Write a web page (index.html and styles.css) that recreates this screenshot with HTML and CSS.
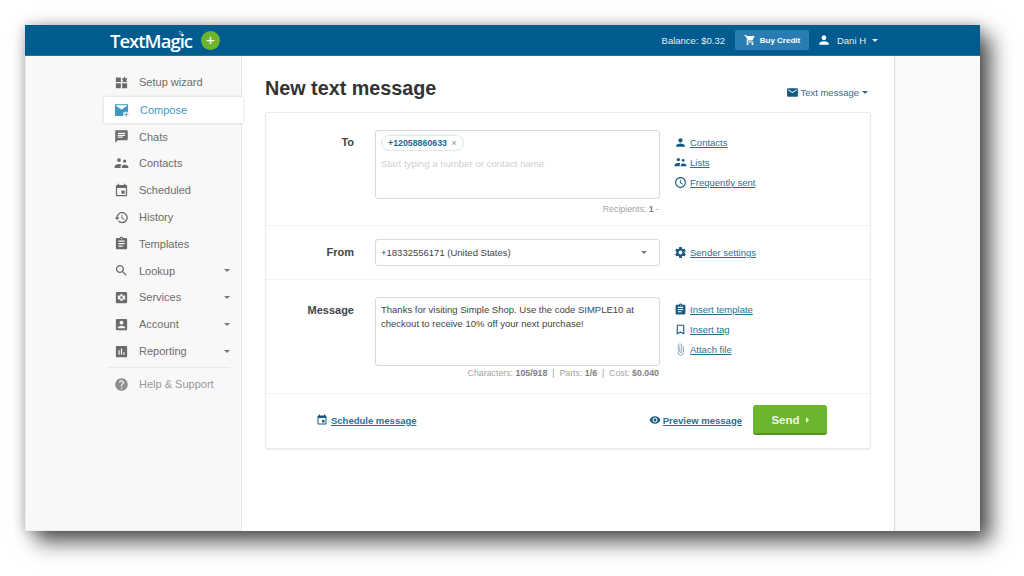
FILE: index.html
```html
<!DOCTYPE html>
<html lang="en">
<head>
    <meta charset="UTF-8">
    <title>New text message - TextMagic</title>
    <link rel="stylesheet" href="styles.css">
</head>
<body>

<svg class="icon-defs" xmlns="http://www.w3.org/2000/svg">
    <symbol id="i-mail" viewBox="0 0 24 24"><path d="M20 4H4c-1.1 0-2 .9-2 2v12c0 1.1.9 2 2 2h16c1.1 0 2-.9 2-2V6c0-1.1-.9-2-2-2zm0 4l-8 5-8-5V6l8 5 8-5v2z"/></symbol>
    <symbol id="i-chat" viewBox="0 0 24 24"><path d="M20 2H4c-1.1 0-2 .9-2 2v18l4-4h14c1.1 0 2-.9 2-2V4c0-1.1-.9-2-2-2zM6 9h12v2H6V9zm8 5H6v-2h8v2zm4-6H6V6h12v2z"/></symbol>
    <symbol id="i-group" viewBox="0 0 24 24"><circle cx="8" cy="6.5" r="3"/><circle cx="17" cy="8" r="2.6"/><path d="M1 19v-2c0-2.6 4-4.2 7-4.2 1.400 0 2.800.3 4 .8-1 .8-1.500 1.900-1.500 3.200V19H1zM12.500 19v-2c0-2 2.700-3 4.500-3s6 1 6 3v2H12.500z"/></symbol>
    <symbol id="i-event" viewBox="0 0 24 24"><path d="M17 12h-5v5h5v-5zM16 1v2H8V1H6v2H5c-1.110 0-1.990.9-1.990 2L3 19c0 1.100.89 2 2 2h14c1.100 0 2-.9 2-2V5c0-1.100-.9-2-2-2h-1V1h-2zm3 18H5V8h14v11z"/></symbol>
    <symbol id="i-history" viewBox="0 0 24 24"><path d="M13 3c-4.970 0-9 4.030-9 9H1l3.890 3.890.07.14L9 12H6c0-3.870 3.130-7 7-7s7 3.130 7 7-3.130 7-7 7c-1.930 0-3.680-.79-4.940-2.060l-1.420 1.420C8.270 19.990 10.510 21 13 21c4.970 0 9-4.030 9-9s-4.030-9-9-9zm-1 5v5l4.280 2.540.72-1.210-3.500-2.080V8H12z"/></symbol>
    <symbol id="i-template" viewBox="0 0 24 24"><path d="M19 3h-4.180C14.400 1.840 13.300 1 12 1c-1.300 0-2.400.84-2.820 2H5c-1.100 0-2 .9-2 2v14c0 1.100.9 2 2 2h14c1.100 0 2-.9 2-2V5c0-1.100-.9-2-2-2zm-7 0c.55 0 1 .45 1 1s-.45 1-1 1-1-.45-1-1 .45-1 1-1zm2 14H7v-2h7v2zm3-4H7v-2h10v2zm0-4H7V7h10v2z"/></symbol>
    <symbol id="i-search" viewBox="0 0 24 24"><path d="M15.500 14h-.79l-.28-.27C15.410 12.590 16 11.110 16 9.500 16 5.910 13.090 3 9.500 3S3 5.910 3 9.500 5.910 16 9.500 16c1.610 0 3.090-.59 4.230-1.570l.27.28v.79l5 4.990L20.490 19l-4.990-5zm-6 0C7.010 14 5 11.990 5 9.500S7.010 5 9.500 5 14 7.010 14 9.500 11.990 14 9.500 14z"/></symbol>
    <symbol id="i-account" viewBox="0 0 24 24"><path d="M3 5v14c0 1.100.89 2 2 2h14c1.100 0 2-.9 2-2V5c0-1.100-.9-2-2-2H5c-1.110 0-2 .9-2 2zm12 4c0 1.660-1.340 3-3 3s-3-1.340-3-3 1.340-3 3-3 3 1.340 3 3zm-9 8c0-2 4-3.100 6-3.100s6 1.100 6 3.100v1H6v-1z"/></symbol>
    <symbol id="i-report" viewBox="0 0 24 24"><path d="M19 3H5c-1.100 0-2 .9-2 2v14c0 1.100.9 2 2 2h14c1.100 0 2-.9 2-2V5c0-1.100-.9-2-2-2zM9 17H7v-7h2v7zm4 0h-2V7h2v10zm4 0h-2v-4h2v4z"/></symbol>
    <symbol id="i-help" viewBox="0 0 24 24"><path d="M12 2C6.480 2 2 6.480 2 12s4.480 10 10 10 10-4.480 10-10S17.520 2 12 2zm1 17h-2v-2h2v2zm2.070-7.750l-.9.92C13.450 12.900 13 13.500 13 15h-2v-.5c0-1.100.45-2.100 1.170-2.830l1.240-1.260c.37-.36.59-.86.59-1.410 0-1.100-.9-2-2-2s-2 .9-2 2H8c0-2.210 1.790-4 4-4s4 1.790 4 4c0 .88-.36 1.680-.93 2.250z"/></symbol>
    <symbol id="i-person" viewBox="0 0 24 24"><path d="M12 12c2.210 0 4-1.790 4-4s-1.790-4-4-4-4 1.790-4 4 1.790 4 4 4zm0 2c-2.670 0-8 1.340-8 4v2h16v-2c0-2.660-5.330-4-8-4z"/></symbol>
    <symbol id="i-cart" viewBox="0 0 24 24"><path d="M7 18c-1.100 0-1.990.9-1.990 2S5.900 22 7 22s2-.9 2-2-.9-2-2-2zM1 2v2h2l3.600 7.590-1.350 2.450c-.16.28-.25.61-.25.96 0 1.100.9 2 2 2h12v-2H7.420c-.14 0-.25-.11-.25-.25l.03-.12.9-1.830h7.450c.75 0 1.410-.41 1.750-1.030l3.580-6.490c.08-.14.12-.31.12-.48 0-.55-.45-1-1-1H5.210l-.94-2H1zm16 16c-1.100 0-1.990.9-1.990 2s.89 2 1.990 2 2-.9 2-2-.9-2-2-2z"/></symbol>
    <symbol id="i-clock" viewBox="0 0 24 24"><path d="M11.990 2C6.470 2 2 6.480 2 12s4.470 10 9.990 10C17.520 22 22 17.520 22 12S17.520 2 11.990 2zM12 20c-4.420 0-8-3.580-8-8s3.580-8 8-8 8 3.580 8 8-3.580 8-8 8zm.5-13H11v6l5.250 3.150.75-1.230-4.500-2.670z"/></symbol>
    <symbol id="i-gear" viewBox="0 0 24 24"><path d="M19.430 12.980c.04-.32.07-.64.07-.98s-.03-.66-.07-.98l2.110-1.650c.19-.15.24-.42.12-.64l-2-3.460c-.12-.22-.39-.3-.61-.22l-2.490 1c-.52-.4-1.080-.73-1.690-.98l-.38-2.650C14.460 2.180 14.250 2 14 2h-4c-.25 0-.46.18-.49.42l-.38 2.650c-.61.25-1.170.59-1.690.98l-2.490-1c-.23-.09-.49 0-.61.22l-2 3.460c-.13.22-.07.49.12.64l2.110 1.650c-.04.32-.07.65-.07.98s.03.66.07.98l-2.110 1.650c-.19.15-.24.42-.12.64l2 3.460c.12.22.39.3.61.22l2.490-1c.52.4 1.080.73 1.690.98l.38 2.650c.03.24.24.42.49.42h4c.25 0 .46-.18.49-.42l.38-2.650c.61-.25 1.170-.59 1.690-.98l2.490 1c.23.09.49 0 .61-.22l2-3.460c.12-.22.07-.49-.12-.64l-2.110-1.650zM12 15.500c-1.930 0-3.500-1.570-3.500-3.500s1.570-3.500 3.500-3.500 3.500 1.570 3.500 3.500-1.570 3.500-3.500 3.500z"/></symbol>
    <symbol id="i-tag" viewBox="0 0 24 24"><path d="M17 3H7c-1.100 0-1.990.9-1.990 2L5 21l7-3 7 3V5c0-1.100-.9-2-2-2zm0 15l-5-2.180L7 18V5h10v13z"/></symbol>
    <symbol id="i-clip" viewBox="0 0 24 24"><path d="M16.500 6v11.500c0 2.210-1.790 4-4 4s-4-1.790-4-4V5c0-1.380 1.120-2.500 2.500-2.500s2.500 1.120 2.500 2.500v10.500c0 .55-.45 1-1 1s-1-.45-1-1V6H10v9.500c0 1.380 1.120 2.500 2.500 2.500s2.500-1.120 2.500-2.500V5c0-2.210-1.790-4-4-4S7 2.790 7 5v12.500c0 3.040 2.460 5.500 5.500 5.500s5.500-2.460 5.500-5.500V6h-1.500z"/></symbol>
    <symbol id="i-eye" viewBox="0 0 24 24"><path d="M12 4.500C7 4.500 2.730 7.610 1 12c1.730 4.390 6 7.500 11 7.500s9.270-3.110 11-7.500c-1.730-4.390-6-7.500-11-7.500zM12 17c-2.760 0-5-2.240-5-5s2.240-5 5-5 5 2.240 5 5-2.240 5-5 5zm0-8c-1.660 0-3 1.340-3 3s1.340 3 3 3 3-1.340 3-3-1.340-3-3-3z"/></symbol>
    <symbol id="i-wizard" viewBox="0 0 24 24"><path d="M3 4h8v7H3zM3 13h8v8H3zM13 13h8v8h-8zM17 2l1.500 3H21v2l-1.500 1.500L21 11h-8l1.500-2.500L13 7V5h2.500z"/></symbol>
    <symbol id="i-services" viewBox="0 0 24 24"><path fill-rule="evenodd" d="M5 3h14a2 2 0 0 1 2 2v14a2 2 0 0 1-2 2H5a2 2 0 0 1-2-2V5a2 2 0 0 1 2-2zm5.500 3.500v2L9 9.200 7 8.500 5.600 11l1.500 1-1.500 1L7 15.500l2-.7 1.500.7v2h3v-2l1.500-.7 2 .7 1.400-2.500-1.500-1 1.500-1L17 8.500l-2 .7-1.500-.7v-2zM12 10a2 2 0 1 1 0 4 2 2 0 0 1 0-4z"/></symbol>
</svg>

<div class="window">
    <header class="topbar">
        <div class="brand">
            <span class="logo">TextMagic
                <svg class="logo-signal" viewBox="0 0 8 8"><path d="M1 4a3 3 0 0 1 3 3M1 1.500a5.500 5.500 0 0 1 5.500 5.500"/></svg>
            </span>
            <span class="add-btn">+</span>
        </div>
        <div class="top-right">
            <span class="balance">Balance: $0.32</span>
            <a class="buy-btn"><svg class="ico-cart"><use href="#i-cart"/></svg>Buy Credit</a>
            <svg class="ico-user"><use href="#i-person"/></svg>
            <span class="user-name">Dani H</span>
            <span class="caret caret-white"></span>
        </div>
    </header>

    <div class="layout">
        <nav class="sidebar">
            <a class="nav-item"><svg class="nav-ico"><use href="#i-wizard"/></svg>Setup wizard</a>
            <a class="nav-item active">
                <svg class="nav-ico" viewBox="0 0 16 16"><path d="M1 2.500h14v8.500h-5v4H1zM2 4l6 4 6-4v-.5H2z" fill-rule="evenodd"/><path class="plus" d="M12.300 10.500h1.400v2H15.700v1.400h-2v2h-1.400v-2h-2v-1.400h2z"/></svg>Compose
            </a>
            <a class="nav-item"><svg class="nav-ico"><use href="#i-chat"/></svg>Chats</a>
            <a class="nav-item"><svg class="nav-ico"><use href="#i-group"/></svg>Contacts</a>
            <a class="nav-item"><svg class="nav-ico"><use href="#i-event"/></svg>Scheduled</a>
            <a class="nav-item"><svg class="nav-ico"><use href="#i-history"/></svg>History</a>
            <a class="nav-item"><svg class="nav-ico"><use href="#i-template"/></svg>Templates</a>
            <a class="nav-item"><svg class="nav-ico"><use href="#i-search"/></svg>Lookup<span class="caret"></span></a>
            <a class="nav-item"><svg class="nav-ico"><use href="#i-services"/></svg>Services<span class="caret"></span></a>
            <a class="nav-item"><svg class="nav-ico"><use href="#i-account"/></svg>Account<span class="caret"></span></a>
            <a class="nav-item"><svg class="nav-ico"><use href="#i-report"/></svg>Reporting<span class="caret"></span></a>
            <div class="nav-divider"></div>
            <a class="nav-item nav-help"><svg class="nav-ico"><use href="#i-help"/></svg>Help &amp; Support</a>
        </nav>

        <main class="content">
            <div class="page-head">
                <h1>New text message</h1>
                <a class="type-switch"><svg class="ico"><use href="#i-mail"/></svg>Text message<span class="caret caret-dark"></span></a>
            </div>

            <div class="card">
                <div class="form-row row-to">
                    <label class="row-label">To</label>
                    <div class="field">
                        <div class="input-box box-tall">
                            <span class="chip">+12058860633 <i>×</i></span>
                            <div class="placeholder">Start typing a number or contact name</div>
                        </div>
                        <div class="hint">Recipients: <b>1</b> -</div>
                    </div>
                    <div class="side-links">
                        <a><svg class="ico"><use href="#i-person"/></svg><u>Contacts</u></a>
                        <a><svg class="ico"><use href="#i-group"/></svg><u>Lists</u></a>
                        <a><svg class="ico"><use href="#i-clock"/></svg><u>Frequently sent</u></a>
                    </div>
                </div>

                <div class="form-row row-from">
                    <label class="row-label">From</label>
                    <div class="field">
                        <div class="input-box box-select">+18332556171 (United States)<span class="caret"></span></div>
                    </div>
                    <div class="side-links">
                        <a><svg class="ico"><use href="#i-gear"/></svg><u>Sender settings</u></a>
                    </div>
                </div>

                <div class="form-row row-message">
                    <label class="row-label">Message</label>
                    <div class="field">
                        <div class="input-box box-tall box-text">Thanks for visiting Simple Shop. Use the code SIMPLE10 at checkout to receive 10% off your next purchase!</div>
                        <div class="hint">Characters: <b>105/918</b> &nbsp;|&nbsp; Parts: <b>1/6</b> &nbsp;|&nbsp; Cost: <b>$0.040</b></div>
                    </div>
                    <div class="side-links">
                        <a><svg class="ico"><use href="#i-template"/></svg><u>Insert template</u></a>
                        <a><svg class="ico"><use href="#i-tag"/></svg><u>Insert tag</u></a>
                        <a><svg class="ico ico-muted"><use href="#i-clip"/></svg><u>Attach file</u></a>
                    </div>
                </div>

                <div class="card-foot">
                    <a class="foot-link"><svg class="ico"><use href="#i-event"/></svg><u>Schedule message</u></a>
                    <div class="foot-right">
                        <a class="foot-link"><svg class="ico"><use href="#i-eye"/></svg><u>Preview message</u></a>
                        <button class="send-btn" type="button">Send<span class="arrow"></span></button>
                    </div>
                </div>
            </div>
        </main>

        <aside class="right-panel"></aside>
    </div>
</div>

</body>
</html>
```

FILE: styles.css
```css
html, body {
    height: 100%;
}
body {
    margin: 0;
    padding: 25px 44px 45px 25px;
    box-sizing: border-box;
    background-color: #ffffff;
    font-family: "Liberation Sans", Arial, sans-serif;
    font-size: 11px;
    color: #333;
    overflow: hidden;
}
a {
    color: inherit;
    text-decoration: none;
}
.icon-defs {
    display: none;
}
.window {
    height: 506px;
    display: flex;
    flex-direction: column;
    background: #fff;
    box-shadow: 11px 11px 20px rgba(0, 0, 0, 0.66), 0 0 12px rgba(0, 0, 0, 0.25);
}

/* Top bar */
.topbar {
    height: 31px;
    flex: none;
    display: flex;
    align-items: center;
    justify-content: space-between;
    background-color: #005b8e;
    color: #fff;
    padding: 0 102px 0 85px;
    border-bottom: 1px solid #2c6f98;
    box-sizing: border-box;
}
.brand {
    display: flex;
    align-items: center;
}
.logo {
    position: relative;
    font-family: "Open Sans", sans-serif;
    font-size: 18.5px;
    font-weight: 600;
    letter-spacing: -1px;
}
.logo-signal {
    position: absolute;
    top: 2px;
    right: 8px;
    width: 6px;
    height: 6px;
    fill: none;
    stroke: #cfe0ea;
    stroke-width: 0.9;
}
.add-btn {
    width: 19px;
    height: 19px;
    margin-left: 9px;
    border-radius: 50%;
    background-color: #6cb52d;
    font-size: 15px;
    line-height: 18px;
    text-align: center;
}
.top-right {
    display: flex;
    align-items: center;
}
.balance {
    font-size: 9.5px;
    color: #e4eef4;
}
.buy-btn {
    width: 74px;
    height: 20px;
    margin: 0 8px 0 10px;
    display: flex;
    align-items: center;
    justify-content: center;
    background-color: #2a7db3;
    border-radius: 2px;
    font-size: 8px;
    font-weight: bold;
}
.ico-cart {
    width: 12px;
    height: 12px;
    fill: #fff;
    margin-right: 4px;
}
.ico-user {
    width: 14px;
    height: 14px;
    fill: #fff;
    margin-right: 6px;
}
.user-name {
    font-size: 9.5px;
    color: #e4eef4;
}
.caret {
    width: 0;
    height: 0;
    border-left: 3px solid transparent;
    border-right: 3px solid transparent;
    border-top: 3px solid #777;
}
.caret-white {
    margin-left: 6px;
    border-top-color: #e4eef4;
}
.caret-dark {
    margin-left: 3px;
    border-top-color: #3a6a86;
}

/* Sidebar */
.layout {
    flex: 1;
    display: flex;
    min-height: 0;
}
.sidebar {
    width: 217px;
    flex: none;
    box-sizing: border-box;
    padding: 13px 0 0 78px;
    background-color: #f8f8f8;
    border-right: 1px solid #e8e8e8;
    border-bottom: 1px solid #eee;
    border-left: 1px solid #eee;
}
.nav-item {
    height: 26.8px;
    display: flex;
    align-items: center;
    padding: 0 11px 0 10px;
    font-size: 11px;
    color: #6d6d6d;
    box-sizing: border-box;
}
.nav-ico {
    width: 15px;
    height: 15px;
    margin-right: 10px;
    fill: #6a6a6a;
    flex: none;
}
.nav-item .caret {
    margin-left: auto;
}
.nav-item.active {
    position: relative;
    width: 139px;
    height: 26px;
    margin: 1px 0 0.5px;
    background: #fff;
    color: #3f98c2;
    box-shadow: 0 0 3px rgba(0, 0, 0, 0.16);
    z-index: 1;
}
.nav-item.active .nav-ico {
    fill: #3f98c2;
    margin-right: 11px;
}
.plus {
    stroke: #fff;
    stroke-width: 0.6;
}
.nav-divider {
    height: 1px;
    margin: 3px 11px 2.5px 4px;
    background-color: #eaeaea;
}
.nav-help {
    color: #999;
}
.nav-help .nav-ico {
    fill: #8f8f8f;
}

/* Main */
.content {
    flex: 1;
    padding: 20px 23px 0 23px;
    min-width: 0;
}
.page-head {
    height: 24px;
    margin-bottom: 12px;
    display: flex;
    align-items: center;
    justify-content: space-between;
}
h1 {
    margin: 0;
    font-size: 19.75px;
    font-weight: bold;
    color: #333;
}
.type-switch {
    display: flex;
    align-items: center;
    margin: 8px 3px 0 0;
    color: #3a6a86;
    font-size: 9.5px;
}
.type-switch .ico {
    margin-right: 1px;
}
.ico {
    width: 13px;
    height: 13px;
    margin-right: 3px;
    fill: #15597f;
    flex: none;
}
.card {
    width: 606px;
    box-sizing: border-box;
    border: 1px solid #ebebeb;
    border-radius: 2px;
    box-shadow: 0 1px 2px rgba(0, 0, 0, 0.06);
}
.form-row {
    display: grid;
    grid-template-columns: 88px 285px 1fr;
    column-gap: 21px;
    padding: 17px 0 0;
    border-bottom: 1px solid #f3f3f3;
    box-sizing: border-box;
}
.row-to {
    height: 113px;
}
.row-from {
    height: 54px;
    padding-top: 13px;
}
.row-message {
    height: 114px;
}
.row-label {
    text-align: right;
    font-size: 11px;
    font-weight: bold;
    color: #444;
    line-height: 26px;
}
.row-to .row-label {
    line-height: 25px;
}
.row-message .row-label {
    line-height: 27px;
}
.input-box {
    box-sizing: border-box;
    border: 1px solid #d9d9d9;
    border-radius: 3px;
    background: #fff;
}
.box-tall {
    height: 69px;
    padding: 4px 5px;
}
.box-select {
    height: 27px;
    padding: 0 12px 0 5px;
    display: flex;
    align-items: center;
    justify-content: space-between;
    font-size: 9.5px;
    color: #444;
}
.box-text {
    font-size: 9.5px;
    line-height: 14px;
    color: #444;
    padding-top: 5px;
}
.chip {
    display: inline-block;
    height: 16px;
    line-height: 14px;
    box-sizing: border-box;
    padding: 0 6px;
    border: 1px solid #dbe7ee;
    border-radius: 9px;
    font-size: 8.8px;
    font-weight: bold;
    color: #1c6a8f;
}
.chip i {
    font-style: normal;
    font-weight: normal;
    color: #888;
    margin-left: 2px;
}
.placeholder {
    margin-top: 7px;
    font-size: 9.6px;
    color: #d0d0d0;
}
.hint {
    margin: 5px 1px 0 0;
    text-align: right;
    font-size: 8.8px;
    color: #a3a3a3;
}
.row-message .hint {
    margin-top: 2px;
}
.hint b {
    color: #808080;
}
.side-links {
    display: flex;
    flex-direction: column;
    margin-left: -7px;
    padding-top: 2px;
}
.row-from .side-links {
    padding-top: 3px;
}
.side-links a {
    height: 20px;
    display: flex;
    align-items: center;
    font-size: 9.5px;
    color: #2a6f95;
}
.ico-muted {
    fill: #7f9fb2;
}

/* Card footer */
.card-foot {
    height: 54px;
    display: flex;
    align-items: center;
    justify-content: space-between;
    padding: 0 43px 2px 50px;
    box-sizing: border-box;
}
.foot-link {
    display: flex;
    align-items: center;
    font-size: 9.5px;
    font-weight: bold;
    color: #2a6f95;
}
.foot-link .ico {
    width: 12px;
    height: 12px;
}
.foot-right {
    display: flex;
    align-items: center;
}
.foot-right .ico {
    margin-right: 2px;
}
.send-btn {
    width: 74px;
    height: 30px;
    margin-left: 11px;
    padding: 1px 0 0;
    display: flex;
    align-items: center;
    justify-content: center;
    background-color: #6cb52f;
    color: #eef7e4;
    border: none;
    border-bottom: 2px solid #549322;
    border-radius: 3px;
    font-family: inherit;
    font-size: 11.5px;
    font-weight: bold;
}
.arrow {
    margin-left: 6px;
    width: 0;
    height: 0;
    border-top: 3px solid transparent;
    border-bottom: 3px solid transparent;
    border-left: 3px solid #eef7e4;
}
.right-panel {
    width: 86px;
    flex: none;
    background-color: #f9f9f9;
    border-left: 1px solid #d8d8d8;
    box-sizing: border-box;
}
```
